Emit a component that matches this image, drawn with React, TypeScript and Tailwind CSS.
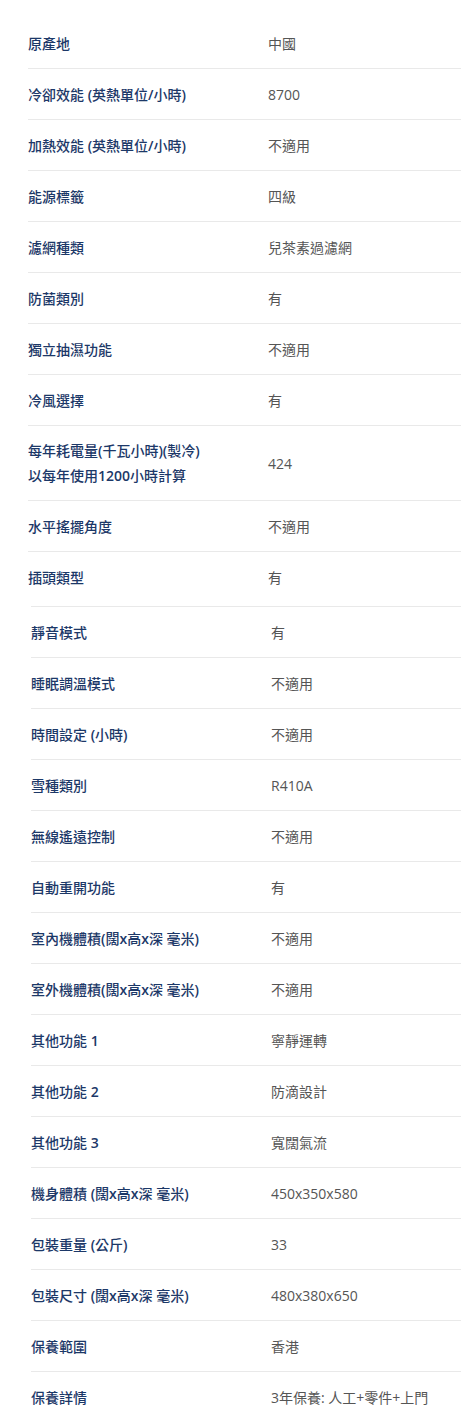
const tableOne: [string, string][] = [
  ["原產地", "中國"],
  ["冷卻效能 (英熱單位/小時)", "8700"],
  ["加熱效能 (英熱單位/小時)", "不適用"],
  ["能源標籤", "四級"],
  ["濾網種類", "兒茶素過濾網"],
  ["防菌類別", "有"],
  ["獨立抽濕功能", "不適用"],
  ["冷風選擇", "有"],
  ["每年耗電量(千瓦小時)(製冷)\n以每年使用1200小時計算", "424"],
  ["水平搖擺角度", "不適用"],
  ["插頭類型", "有"],
];

const tableTwo: [string, string][] = [
  ["靜音模式", "有"],
  ["睡眠調溫模式", "不適用"],
  ["時間設定 (小時)", "不適用"],
  ["雪種類別", "R410A"],
  ["無線遙遠控制", "不適用"],
  ["自動重開功能", "有"],
  ["室內機體積(闊x高x深 毫米)", "不適用"],
  ["室外機體積(闊x高x深 毫米)", "不適用"],
  ["其他功能 1", "寧靜運轉"],
  ["其他功能 2", "防滴設計"],
  ["其他功能 3", "寬闊氣流"],
  ["機身體積 (闊x高x深 毫米)", "450x350x580"],
  ["包裝重量 (公斤)", "33"],
  ["包裝尺寸 (闊x高x深 毫米)", "480x380x650"],
  ["保養範圍", "香港"],
  ["保養詳情", "3年保養: 人工+零件+上門"],
];

// Open Sans has no 500, so latin runs get 600 while CJK stays medium
function Label({ text }: { text: string }) {
  const lines = text.split("\n");
  return (
    <>
      {lines.map((line, li) => (
        <span key={li} className="block">
          {line.split(/([\u0000-\u2fff]+)/).map((part, pi) =>
            /^[\u0000-\u2fff]+$/.test(part) ? (
              <span key={pi} className="font-semibold">
                {part}
              </span>
            ) : (
              part
            )
          )}
        </span>
      ))}
    </>
  );
}

function SpecRow({ label, value }: { label: string; value: string }) {
  const tall = label.includes("\n");
  return (
    <div
      className={
        "flex items-center border-b border-[#e9e9e9] last:border-b-0 " +
        (tall ? "py-[12px]" : "py-[12.5px]")
      }
    >
      <div className="w-[240px] shrink-0 font-medium text-[#1c3868]">
        <Label text={label} />
      </div>
      <div className="flex-1 text-[#555555]">{value}</div>
    </div>
  );
}

export default function App() {
  return (
    <div
      className="min-h-screen bg-white pt-[18px] text-[14px] leading-[25px]"
      style={{ fontFamily: '"Open Sans", "Noto Sans CJK TC", sans-serif' }}
    >
      {/* Specs block 1 */}
      <div className="ml-[28px]">
        {tableOne.map(([label, value]) => (
          <SpecRow key={label} label={label} value={value} />
        ))}
      </div>

      {/* Specs block 2 */}
      <div className="ml-[31px] mt-[4px] border-t border-[#e9e9e9]">
        {tableTwo.map(([label, value]) => (
          <SpecRow key={label} label={label} value={value} />
        ))}
      </div>
    </div>
  );
}
